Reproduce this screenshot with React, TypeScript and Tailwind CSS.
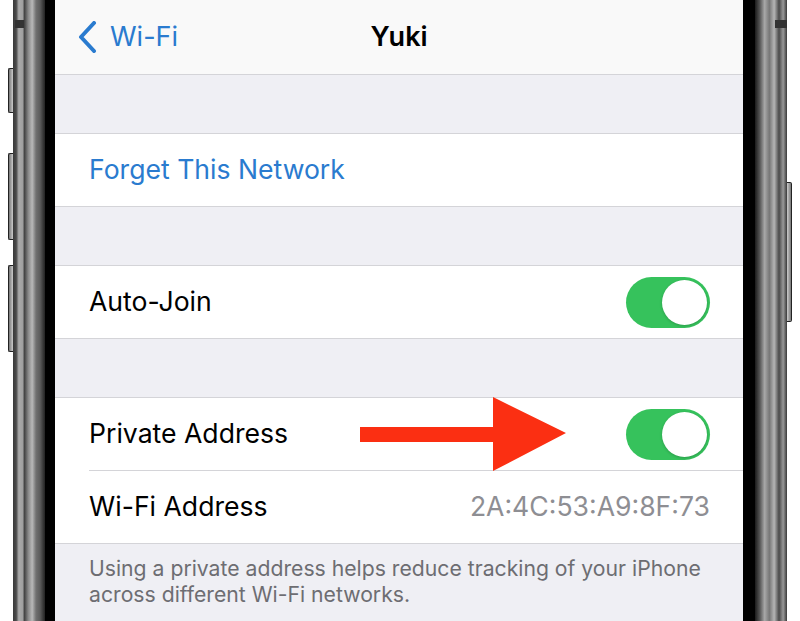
const BLUE = "text-[#2a7bcf]";

function Toggle() {
  return (
    <div className="flex h-[51px] w-[84px] items-center justify-end rounded-full bg-[#36c25c] p-[3px]">
      <div className="h-[45px] w-[45px] rounded-full bg-white shadow-[0_1px_3px_rgba(0,0,0,0.2)]" />
    </div>
  );
}

function Row({ children, className = "" }: { children: React.ReactNode; className?: string }) {
  return (
    <div className={`flex h-[72px] items-center justify-between pl-[34px] pr-[33px] ${className}`}>
      {children}
    </div>
  );
}

function Gap() {
  return <div className="h-[59px] border-b border-[#d4d4d8]" />;
}

function LeftBezel() {
  return (
    <div className="flex h-full w-[55px] shrink-0">
      <div className="flex w-[13px] flex-col items-end">
        <div className="mt-[68px] h-[45px] w-[5px] rounded-l-[2px] border border-r-0 border-[#222] bg-[linear-gradient(to_right,#777,#ccc)]" />
        <div className="mt-[40px] h-[87px] w-[5px] rounded-l-[2px] border border-r-0 border-[#222] bg-[linear-gradient(to_right,#777,#ccc)]" />
        <div className="mt-[25px] h-[87px] w-[5px] rounded-l-[2px] border border-r-0 border-[#222] bg-[linear-gradient(to_right,#777,#ccc)]" />
      </div>
      <div className="flex w-[32px] flex-col bg-[linear-gradient(to_right,#3a3a3a_0%,#4a4a4a_10%,#aaaaaa_18%,#a0a0a0_30%,#454545_36%,#8a8a8a_48%,#b8b8b8_60%,#707070_72%,#5a5a5a_85%,#222_100%)]">
        <div className="ml-[2px] mt-[20px] h-[8px] w-[9px] bg-[#333]" />
      </div>
      <div className="w-[10px] bg-black" />
    </div>
  );
}

function RightBezel() {
  return (
    <div className="flex h-full w-[57px] shrink-0">
      <div className="w-[12px] bg-black" />
      <div className="flex w-[32px] flex-col items-end bg-[linear-gradient(to_right,#1a1a1a_0%,#555_15%,#a8a8a8_30%,#777_45%,#b5b5b5_60%,#4a4a4a_75%,#9a9a9a_88%,#3a3a3a_100%)]">
        <div className="mt-[20px] h-[8px] w-[12px] bg-[#333]" />
      </div>
      <div className="flex w-[13px] flex-col">
        <div className="mt-[182px] h-[140px] w-[5px] rounded-r-[2px] border border-l-0 border-[#222] bg-[linear-gradient(to_right,#ccc,#777)]" />
      </div>
    </div>
  );
}

function Arrow() {
  return (
    <svg
      className="absolute left-[305px] top-[-1px]"
      width="206"
      height="74"
      viewBox="0 0 206 74"
    >
      <polygon
        points="0,30 133,30 133,0 206,36 133,74 133,45 0,45"
        fill="#fb2f12"
      />
    </svg>
  );
}

export default function App() {
  return (
    <div
      className="flex h-[621px] w-[800px] overflow-hidden bg-white"
      style={{ fontFamily: "Inter, 'Noto Sans', sans-serif" }}
    >
      <LeftBezel />
      <div className="flex h-full flex-1 flex-col bg-[#efeff4] text-[26.6px] text-black">
        <div className="grid h-[75px] shrink-0 grid-cols-3 items-center border-b border-[#d4d4d8] bg-[#f9f9f9]">
          <div className={`flex items-center gap-[13px] pl-[22px] ${BLUE}`}>
            <svg width="20" height="32" viewBox="0 0 20 32" fill="none">
              <path
                d="M17 2 L4 16 L17 30"
                stroke="currentColor"
                strokeWidth="4"
                strokeLinecap="round"
                strokeLinejoin="round"
              />
            </svg>
            <span className="text-[27px]">Wi-Fi</span>
          </div>
          <div className="text-center text-[27px] font-semibold">Yuki</div>
          <div />
        </div>

        <Gap />
        <div className="border-b border-[#d4d4d8] bg-white">
          <Row>
            <span className={BLUE}>Forget This Network</span>
          </Row>
        </div>

        <Gap />
        <div className="border-b border-[#d4d4d8] bg-white">
          <Row>
            <span>Auto-Join</span>
            <Toggle />
          </Row>
        </div>

        <Gap />
        <div className="border-b border-[#d4d4d8] bg-white">
          <Row className="relative">
            <span>Private Address</span>
            <Arrow />
            <Toggle />
          </Row>
          <div className="ml-[34px] h-px bg-[#d4d4d8]" />
          <Row>
            <span>Wi-Fi Address</span>
            <span className="text-[#8e8e93]">2A:4C:53:A9:8F:73</span>
          </Row>
        </div>

        <div className="px-[34px] pt-[11px] text-[21.2px] leading-[26px] text-[#6d6d72]">
          Using a private address helps reduce tracking of your iPhone across different Wi-Fi networks.
        </div>
      </div>
      <RightBezel />
    </div>
  );
}
